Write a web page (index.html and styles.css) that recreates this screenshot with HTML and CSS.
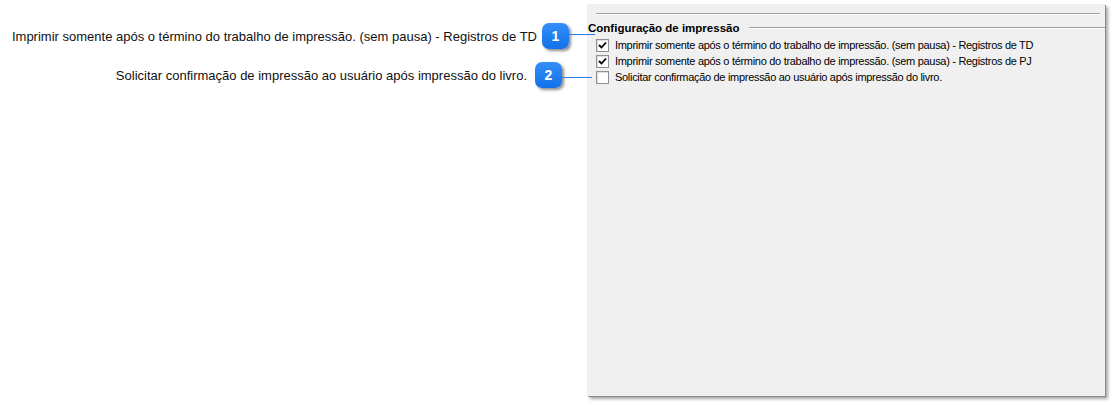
FILE: index.html
```html
<!DOCTYPE html>
<html lang="pt-BR">
<head>
    <meta charset="UTF-8" />
    <title>Configuração de impressão</title>
    <link rel="stylesheet" href="styles.css">
</head>
<body>
<div class="page">
    <div class="notes">
        <div class="note note1">
            <span class="note_text">Imprimir somente após o término do trabalho de impressão. (sem pausa) - Registros de TD</span>
            <span class="badge">1</span>
            <span class="link"></span>
        </div>
        <div class="note note2">
            <span class="note_text">Solicitar confirmação de impressão ao usuário após impressão do livro.</span>
            <span class="badge">2</span>
            <span class="link"></span>
        </div>
    </div>
    <div class="panel">
        <div class="sep"></div>
        <div class="group">
            <div class="legend">
                <span class="legend_text">Configuração de impressão</span>
                <span class="legend_line"></span>
            </div>
            <ul class="checks">
                <li>
                    <span class="box"><svg width="9" height="9" viewBox="0 0 9 9"><path d="M1 4 L3.5 6.5 L8 1.5" fill="none" stroke="#000" stroke-width="1.8"/></svg></span>
                    <span>Imprimir somente após o término do trabalho de impressão. (sem pausa) - Registros de TD</span>
                </li>
                <li>
                    <span class="box"><svg width="9" height="9" viewBox="0 0 9 9"><path d="M1 4 L3.5 6.5 L8 1.5" fill="none" stroke="#000" stroke-width="1.8"/></svg></span>
                    <span>Imprimir somente após o término do trabalho de impressão. (sem pausa) - Registros de PJ</span>
                </li>
                <li>
                    <span class="box"></span>
                    <span>Solicitar confirmação de impressão ao usuário após impressão do livro.</span>
                </li>
            </ul>
        </div>
    </div>
</div>
</body>
</html>
```

FILE: styles.css
```css
body{
    margin:0;
    background:#fff;
    font-family:"Liberation Sans", Arial, sans-serif;
}
ul{
    padding:0;
    margin:0;
}
.page{
    display:flex;
    width:1115px;
    height:405px;
}
.notes{
    width:587px;
    flex:none;
    padding-top:23px;
    display:flex;
    flex-direction:column;
    gap:13px;
    position:relative;
    z-index:1;
}
.note{
    display:flex;
    align-items:center;
    justify-content:flex-end;
    height:26px;
}
.note_text{
    font-size:13px;
    color:#111;
    white-space:nowrap;
}
.badge{
    width:27px;
    height:26px;
    border-radius:7px;
    background:linear-gradient(#3390f8,#1270ea);
    box-shadow:2px 2px 3px rgba(0,0,0,0.45);
    color:#fff;
    font-weight:bold;
    font-size:14px;
    display:flex;
    align-items:center;
    justify-content:center;
}
.link{
    height:1px;
    background:#2a7de8;
}
.note1 .badge{ margin-left:5px; }
.note1 .link{ width:26px; margin-right:-8px; margin-top:-4px; }
.note2 .badge{ margin-left:8px; }
.note2 .link{ width:30px; margin-right:-5px; margin-top:4px; }

.panel{
    width:518px;
    height:392px;
    margin-top:4px;
    background:#f0f0f0;
    box-shadow:1px 1px 0 #8a8a8a, 3px 3px 3px rgba(0,0,0,0.35);
    font-size:11px;
    letter-spacing:-0.3px;
    color:#000;
}
.sep{
    margin:9px 5px 0 9px;
    border-top:1px solid #a0a0a0;
    border-bottom:1px solid #fff;
}
.group{
    padding-top:6px;
}
.legend{
    display:flex;
    align-items:center;
    padding-left:1px;
    height:13px;
}
.legend_text{
    font-weight:bold;
    font-size:11.5px;
    letter-spacing:0;
}
.legend_line{
    flex:1;
    margin-left:10px;
    border-top:1px solid #a0a0a0;
    border-bottom:1px solid #fff;
}
.checks{
    padding:3px 0 0 9px;
}
.checks li{
    list-style:none;
    display:flex;
    align-items:center;
    gap:6px;
    height:16px;
}
.box{
    width:11px;
    height:11px;
    border:1px solid #8e8f8f;
    background:#fff;
    box-shadow:inset 1px 1px 1px #dcdcdc;
    display:flex;
    align-items:center;
    justify-content:center;
}
```
